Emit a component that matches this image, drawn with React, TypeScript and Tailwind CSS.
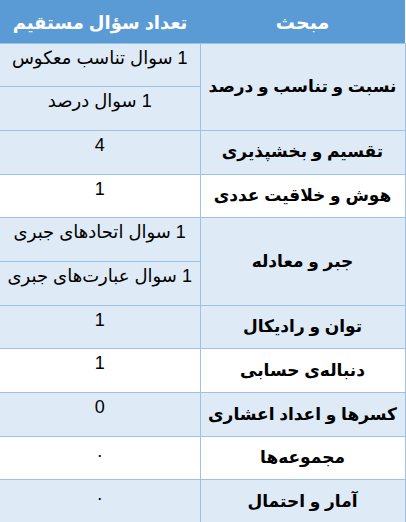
const rows: { topic: string; counts: string[]; shaded: boolean }[] = [
  { topic: "نسبت و تناسب و درصد", counts: ["1 سوال تناسب معکوس", "1 سوال درصد"], shaded: true },
  { topic: "تقسیم و بخشپذیری", counts: ["4"], shaded: true },
  { topic: "هوش و خلاقیت عددی", counts: ["1"], shaded: false },
  { topic: "جبر و معادله", counts: ["1 سوال اتحادهای جبری", "1 سوال عبارت‌های جبری"], shaded: true },
  { topic: "توان و رادیکال", counts: ["1"], shaded: true },
  { topic: "دنباله‌ی حسابی", counts: ["1"], shaded: false },
  { topic: "کسرها و اعداد اعشاری", counts: ["0"], shaded: true },
  { topic: "مجموعه‌ها", counts: ["."], shaded: false },
  { topic: "آمار و احتمال", counts: ["."], shaded: true },
];

export default function App() {
  return (
    <div
      className="w-[406px] h-[522px] overflow-hidden bg-white"
      style={{ fontFamily: '"Liberation Sans", "DejaVu Sans", sans-serif' }}
    >
      <table dir="rtl" className="w-[405px] table-fixed border-collapse text-black">
        <colgroup>
          <col className="w-[205px]" />
          <col className="w-[200px]" />
        </colgroup>
        <thead>
          <tr className="h-[43px] bg-[#5b9bd5] text-white">
            <th className="border-b border-[#9cc2e5] pt-1 text-center text-[19px] font-bold whitespace-nowrap">مبحث</th>
            <th className="border-b border-[#9cc2e5] pt-1 text-center text-[18px] font-bold whitespace-nowrap">تعداد سؤال مستقیم</th>
          </tr>
        </thead>
        <tbody>
          {rows.map((r) =>
            r.counts.map((c, i) => (
              <tr key={r.topic + i} className={`h-[43.7px] ${r.shaded ? "bg-[#deeaf6]" : "bg-white"}`}>
                {i === 0 && (
                  <td
                    rowSpan={r.counts.length}
                    className="border border-[#9cc2e5] px-0 text-center align-middle text-[17px] font-bold whitespace-nowrap"
                  >
                    {r.topic}
                  </td>
                )}
                <td className="border-b border-[#9cc2e5] pt-1 text-center align-top text-[18px] leading-[20px] whitespace-nowrap">
                  {c}
                </td>
              </tr>
            ))
          )}
        </tbody>
      </table>
    </div>
  );
}
